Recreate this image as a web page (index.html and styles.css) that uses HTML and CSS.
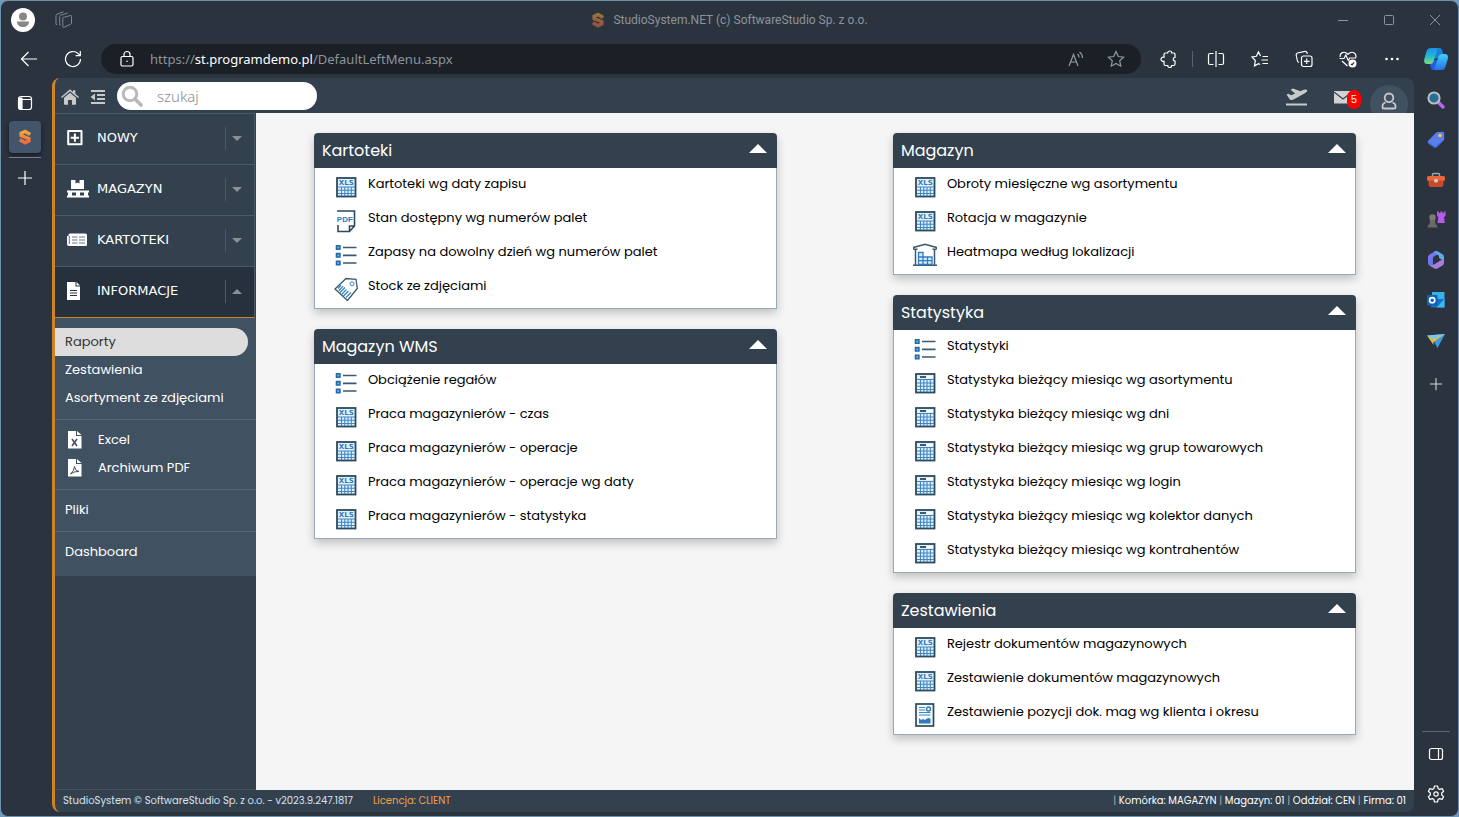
FILE: index.html
```html
<!DOCTYPE html>
<html lang="pl">
<head>
<meta charset="utf-8">
<title>StudioSystem.NET (c) SoftwareStudio Sp. z o.o.</title>
<link rel="stylesheet" href="styles.css">
</head>
<body>
<svg class="sprite" aria-hidden="true">
  <defs>
    <linearGradient id="g-s" x1="0" y1="0" x2="0" y2="1"><stop offset="0" stop-color="#f6a53a"/><stop offset="1" stop-color="#ee6a3c"/></linearGradient>
    <linearGradient id="g-cop1" x1="0" y1="0" x2="0" y2="1"><stop offset="0" stop-color="#1c8fe6"/><stop offset=".5" stop-color="#22b8d4"/><stop offset="1" stop-color="#7fdc7a"/></linearGradient>
    <linearGradient id="g-cop2" x1="0" y1="0" x2="0" y2="1"><stop offset="0" stop-color="#3fd2f5"/><stop offset="1" stop-color="#2a70e8"/></linearGradient>
    <linearGradient id="g-m1" x1="0" y1="0" x2="1" y2="1"><stop offset="0" stop-color="#8b7bf0"/><stop offset="1" stop-color="#3f6fe0"/></linearGradient>
  </defs>
  <symbol id="i-logo" viewBox="0 0 16 20">
    <path fill="none" stroke="url(#g-s)" stroke-width="4.400" d="M14.500 7L8 3 3.200 5.500v2.800l9.600 3.800v2.700L8 17.300 1.500 13.300"/>
  </symbol>
  <symbol id="i-table" viewBox="0 0 24 24">
    <rect x="3" y="3" width="18.500" height="18.500" fill="#e3f0fa" stroke="#2b4a5c" stroke-width="1.800"/>
    <path d="M4 8.500h17M4 12h17M4 15.300h17M4 18.500h17M7.500 8v13M10.800 8v13M14 8v13M17.300 8v13" stroke="#3f86c2" stroke-width="1.100"/>
    <path d="M7 6h6" stroke="#2b4a5c" stroke-width="1.800"/><path d="M14 6h6" stroke="#fff" stroke-width="1.800"/>
  </symbol>
  <symbol id="i-list" viewBox="0 0 24 24">
    <path d="M9 4.500h13.500M9 12.300h13.500M9 20h13.500" stroke="#3b5a6c" stroke-width="1.700"/>
    <path d="M2.500 2.800h3.400v3.400H2.500zM2.500 10.600h3.400V14H2.500zM2.500 18.300h3.400v3.400H2.500z" fill="#6fb0e2" stroke="#1e6bb0" stroke-width="1.600"/>
  </symbol>
  <symbol id="i-tag" viewBox="0 0 24 24">
    <path d="M1 12L12 1.500l10 .8 1.300 9.200L13.500 23.500z" fill="#fff" stroke="#3b5a6c" stroke-width="1.300"/>
    <circle cx="18" cy="6.800" r="2" fill="none" stroke="#3f86c2"/>
    <path d="M7 8l-3 3.500M9 9.200l-4.200 4.600M11 10.500l-5 5M12.500 12.500l-5 5M14.500 14l-5 5M17 15.500l-5 5" stroke="#3f86c2" stroke-width="1.300"/>
  </symbol>
  <symbol id="i-ware" viewBox="0 0 24 24">
    <path d="M2.500 6.500V22M21.500 6.500V22M0 22.300h24M.5 6.500V4.500L12 1.300l11.500 3.200v2M.5 6.300h4M19.500 6.300h4" fill="none" stroke="#3b5a6c" stroke-width="1.500"/>
    <path d="M5.500 9.500h4.500V21.500H5.500zM5.500 14h13.500v7.500H5.500M5.500 17.700h13.500M14.500 14v7.500" fill="#dcecf8" stroke="#2f7bbd" stroke-width="1.300"/>
  </symbol>
  <symbol id="i-report" viewBox="0 0 24 24">
    <rect x="3" y="1" width="17.500" height="22" fill="#f2f8fc" stroke="#2b4a5c" stroke-width="1.700"/>
    <path d="M6 4.500h6M6 7h6M6 9.500h11.500M6 12h11.500" stroke="#3f86c2" stroke-width="1.200"/>
    <circle cx="15.500" cy="6" r="2" fill="none" stroke="#2f7bbd" stroke-width="1.400"/>
    <path d="M6 20.500V15l2 2 2-1 2 1 2-1.500 2-.5 1.500 1v4.500z" fill="#2f7bbd"/>
  </symbol>
  <symbol id="i-plus" viewBox="0 0 16 16"><path d="M8 1v14M1 8h14" stroke="currentColor" stroke-width="1.200"/></symbol>
</svg>
<svg class="labelled-sprite" aria-hidden="true">
  <symbol id="i-xls" viewBox="0 0 24 24">
    <rect x="3" y="3" width="18.500" height="18.500" fill="#e3f0fa" stroke="#2b4a5c" stroke-width="1.800"/>
    <path d="M4 12h17M4 15.300h17M4 18.500h17M7.500 12v9M10.800 12v9M14 12v9M17.300 12v9" stroke="#3f86c2" stroke-width="1.100"/>
    <text class="xls-label" x="12.300" y="10.200" text-anchor="middle">XLS</text>
  </symbol>
  <symbol id="i-pdf" viewBox="0 0 24 24">
    <path d="M3 2h17.500v15l-5 5.500H4V16M15.500 22.500V17h5" fill="none" stroke="#2b4a5c" stroke-width="1.600"/>
    <text class="pdf-label" x="10.800" y="12.500" text-anchor="middle">PDF</text>
  </symbol>
</svg>

<div class="window">
  <header class="titlebar">
    <div class="title-left">
      <button class="avatar" aria-label="Profil">
        <svg viewBox="0 0 24 24"><circle cx="12" cy="8.500" r="4" fill="#8a8686"/><path d="M6 13.500h12c0 3.500-2.500 5.500-6 5.500s-6-2-6-5.500z" fill="#8a8686"/></svg>
      </button>
      <button class="spaces" aria-label="Obszary robocze">
        <svg viewBox="0 0 18 18" fill="none" stroke="#7e8892" stroke-linejoin="round"><path d="M8 6.500l7.500-2q1-.2 1 1V12q0 1-1 1.300l-6.500 3q-1.200.3-1.200-1V7.500z"/><path d="M5.500 14l-.8.100V5.500q0-1 1-1.300l7-2.200M2 13.500l-1 0V4.500q0-1 1-1.300l6.500-2.400"/></svg>
      </button>
    </div>
    <div class="title-text"><svg class="title-logo"><use href="#i-logo"/></svg><span>StudioSystem.NET (c) SoftwareStudio Sp. z o.o.</span></div>
    <div class="win-buttons">
      <button aria-label="Minimalizuj"><svg viewBox="0 0 12 12"><path d="M1 6.500h10"/></svg></button>
      <button aria-label="Maksymalizuj"><svg viewBox="0 0 12 12"><rect x="1.500" y="1.500" width="9" height="9" rx="1"/></svg></button>
      <button aria-label="Zamknij"><svg viewBox="0 0 12 12"><path d="M1 1l10 10M11 1L1 11"/></svg></button>
    </div>
  </header>

  <div class="toolbar">
    <button class="tool" aria-label="Wstecz"><svg viewBox="0 0 18 18"><path d="M17 9H1.500M8.500 2L1.500 9l7 7"/></svg></button>
    <button class="tool" aria-label="Odśwież"><svg viewBox="0 0 18 18"><path d="M16.500 9a7.500 7.500 0 1 1-2.300-5.400L16 5.500M16.300 1v4.700h-4.700"/></svg></button>
    <div class="address">
      <svg class="lock" viewBox="0 0 16 18"><rect x="2" y="6.500" width="12" height="9.500" rx="1.500"/><path d="M5 6.500V4.500a3 3 0 0 1 6 0v2"/><circle cx="8" cy="11.300" r=".8" fill="#fff" stroke="none"/></svg>
      <div class="url">https://<b>st.programdemo.pl</b>/DefaultLeftMenu.aspx</div>
      <button class="in-pill" aria-label="Czytaj na głos"><svg viewBox="0 0 18 18"><path d="M2 16L6.500 4.500 11 16M3.500 12h6M10.500 4q1.500 1 1.500 3.500M12.500 2q3 2 3 6"/></svg></button>
      <button class="in-pill" aria-label="Dodaj do ulubionych"><svg viewBox="0 0 18 18"><path d="M9 1.500l2.300 5 5.400.6-4 3.700 1.100 5.400L9 13.500l-4.800 2.700 1.100-5.400-4-3.700 5.400-.6z"/></svg></button>
    </div>
    <div class="tools">
      <button class="tool" aria-label="Rozszerzenia"><svg viewBox="0 0 18 18"><path d="M5.500 3h2.200a2 2 0 0 1 4 0h2q1.300 0 1.300 1.300V7.500a1.700 1.700 0 0 0 0 3.500v3q0 1.500-1.300 1.500h-2a2 2 0 0 1-4 0H5.500Q4 15.500 4 14v-2.700a2.200 2.200 0 1 1 0-4.100V4.500Q4 3 5.500 3z"/></svg></button>
      <span class="divider"></span>
      <button class="tool" aria-label="Podziel ekran"><svg viewBox="0 0 18 18"><path d="M9 1v16M6.500 3.500H3Q1.500 3.500 1.500 5v8Q1.500 14.500 3 14.500h3.500M11.500 3.500H15q1.500 0 1.500 1.500v8q0 1.500-1.500 1.500h-3.500"/></svg></button>
      <button class="tool" aria-label="Ulubione"><svg viewBox="0 0 18 18"><path d="M11.500 6.500H17M10.500 10H17M11.500 13.500H17M9.500 6L7.500 1.800 5.400 6.300 1 7l3.300 3.500-.8 5.300 4-2.200 1.700 1"/></svg></button>
      <button class="tool" aria-label="Kolekcje"><svg viewBox="0 0 18 18"><rect x="6.500" y="6" width="10.500" height="10.500" rx="2"/><path d="M11.700 8.500v5.500M9 11.300h5.500M4 12.500Q2.500 12 2.300 10.500L1.200 5Q1 3.500 2.500 3L10 1.300q1.500-.2 2 1.200l.3 1.500"/></svg></button>
      <button class="tool" aria-label="Podstawy przeglądarki"><svg viewBox="0 0 18 18"><path d="M1.200 7C.5 3 5 .3 9 4.200 13 .3 17.800 3 16.800 7.500M.5 8.500H5l1.800-3.500 2.500 5.500 1.500-2.500H17M3 11l5.500 5"/><circle cx="13.500" cy="13.500" r="4" fill="#fff" stroke="none"/><path d="M12 13.800l1 1 2-2.300" stroke="#2b333e"/></svg></button>
      <button class="tool" aria-label="Więcej"><svg viewBox="0 0 18 18"><g fill="#fff" stroke="none"><circle cx="3.500" cy="9" r="1.300"/><circle cx="9" cy="9" r="1.300"/><circle cx="14.500" cy="9" r="1.300"/></g></svg></button>
      <button class="tool copilot" aria-label="Copilot"><svg viewBox="0 0 24 24"><g stroke="none"><path fill="#1d5fe0" d="M10 13h5l-2.500 7.500Q11.500 23 9 23q-2 0-3-6z"/><path fill="#1b7fd8" d="M12 1h3.500q2.300 0 3 3l.8 3.500-4.800 4h-4.500z"/><path fill="url(#g-cop1)" d="M6.500 1H14l-4.500 13.500Q8.700 17 6 17H3.500Q-.8 17 .3 12L2.500 4.500Q3.500 1 6.500 1z"/><path fill="url(#g-cop2)" d="M17.500 23H10l4.500-13.500Q15.300 7 18 7h2.500q4.300 0 3.300 5l-2.300 7.500Q20.500 23 17.500 23z"/></g></svg></button>
    </div>
  </div>

  <div class="workspace">
    <nav class="tabs-rail" aria-label="Karty">
      <button class="rail-btn" aria-label="Menu kart"><svg viewBox="0 0 16 16" fill="none" stroke="#fff" stroke-width="1.200"><rect x="1.500" y="1.500" width="13" height="13" rx="2.500"/><path d="M2 4.500h12"/><path d="M2 3h3v11H3q-1 0-1-1z" fill="#fff"/></svg></button>
      <button class="tab-active" aria-label="StudioSystem.NET"><svg><use href="#i-logo"/></svg></button>
      <button class="rail-btn" aria-label="Nowa karta"><svg><use href="#i-plus"/></svg></button>
    </nav>

    <div class="app">
      <header class="app-bar">
        <button class="app-icon" aria-label="Start"><svg viewBox="0 0 18 16"><path fill="#c9c9c9" d="M9 3.800l6 5V15q0 .8-.8.8H11V11H7v4.800H3.800Q3 15.800 3 15V8.800zM0 8l9-7.700 3 2.600V1.200h2.300v3.600L18 8l-.9 1.100L9 2.200.9 9.100z"/></svg></button>
        <button class="app-icon" aria-label="Zwiń menu"><svg viewBox="0 0 18 16"><path fill="#c9c9c9" d="M2 1h14v2H2zM8 5h8v2H8zM8 9h8v2H8zM2 13h14v2H2zM6 4.500v7L1.500 8z"/></svg></button>
        <label class="search">
          <svg viewBox="0 0 22 22"><circle cx="9" cy="9" r="6.800" fill="none" stroke="#b9b9b9" stroke-width="3"/><path d="M14 14l6 6" stroke="#b9b9b9" stroke-width="3.600" stroke-linecap="round"/></svg>
          <input type="search" placeholder="szukaj" aria-label="szukaj">
        </label>
        <div class="app-right">
          <button class="plane" aria-label="Wydania"><svg viewBox="0 0 22 18"><path d="M0 15.500h21v2H0zM.5 6.500l2-.8 2.700 1.600 4-1.800L4.500 1.700 7 .5l7.500 2.700 3-1.400q3-1 3.800.4.300 1.500-2.500 3L8.500 11q-2 1.200-4.500.8z" fill="#c9c9c9"/></svg></button>
          <button class="mail" aria-label="Wiadomości: 5"><svg viewBox="0 0 18 13"><rect width="18" height="12.500" fill="#d2d2d2"/><path d="M0 1l9 7 9-7" fill="none" stroke="#33404e" stroke-width="1.200"/></svg><span class="badge">5</span></button>
          <button class="user" aria-label="Konto"><svg viewBox="0 0 16 18" fill="none" stroke="#c9c9c9" stroke-width="1.800"><circle cx="8" cy="5.800" r="4.300"/><path d="M4.500 10.500Q1.500 11.500 1.500 14v1.500q0 1 1 1h11q1 0 1-1V14q0-2.500-3-3.500"/></svg></button>
        </div>
      </header>

      <div class="app-body">
        <aside class="menu">
          <button class="menu-item"><svg viewBox="0 0 22 18"><path d="M1.200 2h13.300v13.300H1.200z" fill="none" stroke="#fff" stroke-width="2" stroke-linejoin="round"/><path d="M7.900 4.500v8.300M3.700 8.700H12" stroke="#fff" stroke-width="2"/></svg><span>NOWY</span><i class="caret"></i></button>
          <button class="menu-item"><svg viewBox="0 0 22 18"><path d="M4 0h4.500v3.500l2-1 2 1V0H17v9H4zM0 10.500h22v2H0zM0 15.500h22v2H0zM1 12h4v4H1zM9 12h4v4H9zM17 12h4v4h-4z" fill="#fff"/></svg><span>MAGAZYN</span><i class="caret"></i></button>
          <button class="menu-item"><svg viewBox="0 0 22 18"><path d="M3 2.500h15.500q1.500 0 1.500 1.500v9.500q0 1.500-1.500 1.500H2q-2 0-2-2V5h1.500V4q0-1.500 1.500-1.500z" fill="#fff"/><path d="M5 6h5.500M12 6h6M5 9h5.500M12 9h6M5 12h5.500M12 12h6M2.300 5v8" stroke="#667583" stroke-width="1"/></svg><span>KARTOTEKI</span><i class="caret"></i></button>
          <button class="menu-item open" aria-expanded="true"><svg viewBox="0 0 22 18"><path d="M0 0h8.500v4.500H13V18H0zM9.500 0L13 3.500H9.500z" fill="#fff"/><path d="M3 8.500h7M3 11h7M3 13.500h7" stroke="#27313d" stroke-width="1.200"/></svg><span>INFORMACJE</span><i class="caret"></i></button>
          <div class="submenu">
            <a class="sub current" href="#">Raporty</a>
            <a class="sub" href="#">Zestawienia</a>
            <a class="sub" href="#">Asortyment ze zdjęciami</a>
            <hr>
            <a class="sub" href="#"><svg viewBox="0 0 14 18"><path d="M0 0h8v5h5.500v12.500H0zM9 0l4.500 4H9z" fill="#fff"/><path d="M4 8l5 7M9 8l-5 7" stroke="#405161" stroke-width="1.600"/></svg>Excel</a>
            <a class="sub" href="#"><svg viewBox="0 0 14 18"><path d="M0 0h8v5h5.500v12.500H0zM9 0l4.500 4H9z" fill="#fff"/><path d="M2.500 15Q6 12.500 6.500 7.500 7 12 11 12.500 6.500 12 2.500 15z" fill="none" stroke="#405161"/></svg>Archiwum PDF</a>
            <hr>
            <a class="sub" href="#">Pliki</a>
            <hr>
            <a class="sub" href="#">Dashboard</a>
          </div>
        </aside>

        <main class="content">
          <div class="column">
            <section class="panel">
              <header><h2>Kartoteki</h2><button class="fold" aria-label="Zwiń Kartoteki"></button></header>
              <ul>
                <li><a href="#"><svg><use href="#i-xls"/></svg>Kartoteki wg daty zapisu</a></li>
                <li><a href="#"><svg><use href="#i-pdf"/></svg>Stan dostępny wg numerów palet</a></li>
                <li><a href="#"><svg><use href="#i-list"/></svg>Zapasy na dowolny dzień wg numerów palet</a></li>
                <li><a href="#"><svg><use href="#i-tag"/></svg>Stock ze zdjęciami</a></li>
              </ul>
            </section>
            <section class="panel">
              <header><h2>Magazyn WMS</h2><button class="fold" aria-label="Zwiń Magazyn WMS"></button></header>
              <ul>
                <li><a href="#"><svg><use href="#i-list"/></svg>Obciążenie regałów</a></li>
                <li><a href="#"><svg><use href="#i-xls"/></svg>Praca magazynierów - czas</a></li>
                <li><a href="#"><svg><use href="#i-xls"/></svg>Praca magazynierów - operacje</a></li>
                <li><a href="#"><svg><use href="#i-xls"/></svg>Praca magazynierów - operacje wg daty</a></li>
                <li><a href="#"><svg><use href="#i-xls"/></svg>Praca magazynierów - statystyka</a></li>
              </ul>
            </section>
          </div>
          <div class="column">
            <section class="panel">
              <header><h2>Magazyn</h2><button class="fold" aria-label="Zwiń Magazyn"></button></header>
              <ul>
                <li><a href="#"><svg><use href="#i-xls"/></svg>Obroty miesięczne wg asortymentu</a></li>
                <li><a href="#"><svg><use href="#i-xls"/></svg>Rotacja w magazynie</a></li>
                <li><a href="#"><svg><use href="#i-ware"/></svg>Heatmapa według lokalizacji</a></li>
              </ul>
            </section>
            <section class="panel">
              <header><h2>Statystyka</h2><button class="fold" aria-label="Zwiń Statystyka"></button></header>
              <ul>
                <li><a href="#"><svg><use href="#i-list"/></svg>Statystyki</a></li>
                <li><a href="#"><svg><use href="#i-table"/></svg>Statystyka bieżący miesiąc wg asortymentu</a></li>
                <li><a href="#"><svg><use href="#i-table"/></svg>Statystyka bieżący miesiąc wg dni</a></li>
                <li><a href="#"><svg><use href="#i-table"/></svg>Statystyka bieżący miesiąc wg grup towarowych</a></li>
                <li><a href="#"><svg><use href="#i-table"/></svg>Statystyka bieżący miesiąc wg login</a></li>
                <li><a href="#"><svg><use href="#i-table"/></svg>Statystyka bieżący miesiąc wg kolektor danych</a></li>
                <li><a href="#"><svg><use href="#i-table"/></svg>Statystyka bieżący miesiąc wg kontrahentów</a></li>
              </ul>
            </section>
            <section class="panel">
              <header><h2>Zestawienia</h2><button class="fold" aria-label="Zwiń Zestawienia"></button></header>
              <ul>
                <li><a href="#"><svg><use href="#i-xls"/></svg>Rejestr dokumentów magazynowych</a></li>
                <li><a href="#"><svg><use href="#i-xls"/></svg>Zestawienie dokumentów magazynowych</a></li>
                <li><a href="#"><svg><use href="#i-report"/></svg>Zestawienie pozycji dok. mag wg klienta i okresu</a></li>
              </ul>
            </section>
          </div>
        </main>
      </div>

      <footer class="status">
        <span>StudioSystem © SoftwareStudio Sp. z o.o. - v2023.9.247.1817</span>
        <span class="licence">Licencja: CLIENT</span>
        <span class="context"><i>|</i> Komórka: MAGAZYN <i>|</i> Magazyn: 01 <i>|</i> Oddział: CEN <i>|</i> Firma: 01</span>
      </footer>
    </div>

    <nav class="side-rail" aria-label="Pasek boczny">
      <button aria-label="Szukaj"><svg viewBox="0 0 20 20"><path d="M12.500 12.500l4.500 4.500" stroke="#c063ea" stroke-width="3.400" stroke-linecap="round"/><circle cx="8" cy="8" r="5.600" fill="#2a6d94" stroke="#b9c0c4" stroke-width="2"/></svg></button>
      <button aria-label="Zakupy"><svg viewBox="0 0 20 20"><path d="M2 11l8-8.300q.7-.7 1.700-.7l5-.2q1.500 0 1.500 1.500V9q0 1-.8 1.800L11 17q-1.500 1.300-3 .2l-5.500-3.500Q1 12.500 2 11z" fill="#5b7fea"/><path d="M2 12l6 4.500q1 .5 2 0l8-7-.8 1.500L11 17.200q-1.500 1.200-3 .2L2.500 13.800z" fill="#3458c8"/><circle cx="14" cy="5.500" r="1.800" fill="#f5c84c"/></svg></button>
      <button aria-label="Narzędzia"><svg viewBox="0 0 20 20"><path d="M6.500 7V4.500q0-1 1-1h5q1 0 1 1V7" fill="none" stroke="#9aa3aa" stroke-width="1.500"/><rect x="1" y="6" width="18" height="5" rx="1.500" fill="#e8673c"/><path d="M2.500 10.500h15V15q0 2-2 2h-11q-2 0-2-2z" fill="#c9472a"/><circle cx="10" cy="10.800" r="2" fill="#c9cdd0"/></svg></button>
      <button aria-label="Gry"><svg viewBox="0 0 20 20"><circle cx="6.500" cy="7.500" r="3.200" fill="#7b7b7b"/><path d="M4 10h5l.5 4q2 1 2 3.500h-10Q1.500 15 3.500 14z" fill="#696969"/><path d="M11 1.500h2v1.500h1.500V1.500h2v1.500H18V1.500h1.500V6l-1.500 1 .8 6H11.500l.8-6L11 6z" fill="#b55ce6"/></svg></button>
      <button aria-label="Microsoft 365"><svg viewBox="0 0 20 20"><path d="M10 1L3.500 4.500Q2 5.500 2 7v6q0 1.500 1.500 2.500L7 17.300V8.500q0-1.300 1-2l5.500-3z" fill="url(#g-m1)"/><path d="M7.500 1.800L10 1q1 0 2 .5l4.500 2.700Q18 5 18 7v4l-5-3V6.500q0-1-1-1.500z" fill="#62a8ee"/><path d="M18 10v3q0 1.500-1.500 2.500L12 18.300q-2 1-4 0L3.500 15.500 8 14.500l8-5z" fill="#a77bd8"/></svg></button>
      <button aria-label="Outlook"><svg viewBox="0 0 20 20"><rect x="6" y="2" width="12.500" height="9" fill="#35b1ec"/><path d="M5 9h13.500v8.500H5z" fill="#1573c8"/><path d="M18.500 9l-8 8.500h8z" fill="#40b9f1"/><rect x="1" y="5" width="10.500" height="10.500" rx="1" fill="#0f64b8"/><circle cx="6.200" cy="10.200" r="2.600" fill="none" stroke="#fff" stroke-width="1.600"/></svg></button>
      <button aria-label="Drop"><svg viewBox="0 0 20 20"><path d="M1 5.500l18-1.500-7.500 14-3-5.500z" fill="#3d9ae6"/><path d="M1 5.500L19 4 7 10.500z" fill="#7cc6ef"/><path d="M1 5.500l6 4L19 4 7.500 12v3z" fill="#e7bb3c"/></svg></button>
      <button class="side-plus" aria-label="Dostosuj"><svg><use href="#i-plus"/></svg></button>
      <span class="rail-line"></span>
      <button class="line-icon" aria-label="Ukryj pasek"><svg viewBox="0 0 16 16"><rect x="1.500" y="2.500" width="13" height="11" rx="2"/><path d="M10.500 2.500v11"/></svg></button>
      <button class="line-icon gear" aria-label="Ustawienia"><svg viewBox="0 0 18 18"><circle cx="9" cy="9" r="2.200"/><path d="M7.500 1h3l.6 2.500 1.500.9 2.500-.8 1.500 2.600-1.900 1.800v1.900l1.900 1.800-1.500 2.700-2.500-.8-1.500.9-.6 2.500h-3l-.6-2.500-1.500-.9-2.500.8-1.500-2.700 1.900-1.800V8L1.400 6.200l1.500-2.600 2.500.8 1.500-.9z" stroke-linejoin="round"/></svg></button>
    </nav>
  </div>
</div>
</body>
</html>
```

FILE: styles.css
```css
* { box-sizing: border-box; }

body {
  margin: 0;
  background: #6f9bc0;
  font-family: Poppins, Inter, "Open Sans", sans-serif;
  font-size: 13px;
  color: #000;
}

button {
  display: flex;
  align-items: center;
  justify-content: center;
  padding: 0;
  border: 0;
  background: none;
  color: inherit;
  font: inherit;
}

a { color: inherit; text-decoration: none; }
svg { display: block; flex: none; }
.sprite { position: absolute; width: 0; height: 0; }
.labelled-sprite { display: none; }

.window {
  display: flex;
  flex-direction: column;
  min-height: 100vh;
  border: 1px solid #6e93a8;
  border-radius: 8px;
  background: #2b333e;
  overflow: hidden;
}

/* Title bar */
.titlebar {
  display: grid;
  grid-template-columns: 1fr auto 1fr;
  align-items: center;
  height: 38px;
  font-family: Roboto, "Noto Sans", sans-serif;
  font-size: 12px;
  color: #8b949c;
}
.title-left { display: flex; align-items: center; gap: 20px; padding-left: 10px; }
.avatar { width: 24px; height: 24px; border-radius: 50%; background: #fff; }
.avatar svg { width: 24px; height: 24px; }
.spaces svg { width: 18px; height: 18px; }
.title-text { display: flex; align-items: center; gap: 8px; }
.title-logo { width: 14px; height: 16px; opacity: .55; }
.win-buttons { display: flex; justify-content: flex-end; }
.win-buttons button { width: 46px; height: 38px; }
.win-buttons svg { width: 12px; height: 12px; fill: none; stroke: #8b949c; }

/* Address row */
.toolbar { display: flex; align-items: center; height: 39px; padding-left: 6px; }
.tool { width: 44px; height: 38px; }
.tool svg, .in-pill svg { width: 18px; height: 18px; fill: none; stroke: #fff; stroke-width: 1.2; }
.copilot { width: 44px; }
.copilot svg { width: 24px; height: 24px; }
.address {
  display: flex;
  flex: 1;
  align-items: center;
  height: 30px;
  margin: 0 6px;
  padding: 0 5px 0 17px;
  border-radius: 15px;
  background: #1b2027;
}
.lock { width: 18px; height: 18px; margin-right: 14px; fill: none; stroke: #fff; stroke-width: 1.2; }
.url { flex: 1; font-family: "Noto Sans", "Open Sans", sans-serif; font-size: 13px; color: #8d9399; }
.url b { font-weight: 400; color: #fff; }
.in-pill { width: 40px; height: 30px; }
.in-pill svg { stroke: #9299a0; }
.tools { display: flex; align-items: center; }
.divider { width: 1px; height: 16px; margin: 0 1px; background: #59626c; }

.workspace { display: flex; flex: 1; }

/* Browser tabs on the left */
.tabs-rail { display: flex; flex-direction: column; align-items: flex-start; width: 51px; padding: 9px 0 0 8px; }
.rail-btn { width: 32px; height: 32px; color: #fff; }
.rail-btn svg { width: 16px; height: 16px; }
.tab-active {
  position: relative;
  width: 32px;
  height: 32px;
  margin: 2px 0 9px;
  border-radius: 4px;
  background: #43556a;
  box-shadow: 0 2px 4px rgba(0, 0, 0, .5);
}
.tab-active svg { width: 14px; height: 16px; }
.tab-active::after { content: ""; position: absolute; top: 36px; left: 0; width: 100%; height: 1px; background: #77808a; }

/* Application */
.app {
  display: flex;
  flex: 1;
  flex-direction: column;
  margin-bottom: 4px;
  border-left: 3px solid #cd8426;
  border-radius: 8px;
  background: #33414f;
  overflow: hidden;
}
.app-bar { display: flex; height: 35px; padding: 0 6px 0 1px; overflow: hidden; }
.app-icon { width: 28px; height: 37px; }
.app-icon svg { width: 18px; height: 16px; }
.search {
  display: flex;
  align-items: center;
  width: 200px;
  height: 28px;
  margin: 4px 0 0 5px;
  padding-left: 4px;
  border-radius: 14px;
  background: #fff;
}
.search svg { width: 22px; height: 22px; }
.search input {
  width: 150px;
  margin-left: 14px;
  padding: 0;
  border: 0;
  outline: 0;
  background: none;
  font-family: "Noto Sans", "Open Sans", sans-serif;
  font-size: 15px;
  font-weight: 300;
}
.search input::placeholder { color: #8c8c8c; }
.app-right { display: flex; margin-left: auto; }
.plane { width: 22px; height: 38px; margin-right: 26px; }
.plane svg { width: 22px; height: 18px; }
.mail { position: relative; width: 18px; height: 38px; margin-right: 18px; }
.mail svg { width: 18px; height: 13px; }
.badge {
  position: absolute;
  top: 12px;
  left: 13px;
  width: 14px;
  border-radius: 7px;
  background: #f00;
  color: #fff;
  font-size: 10px;
  line-height: 19px;
  text-align: center;
}
.user { width: 38px; height: 38px; margin-top: 7px; border-radius: 50%; background: #405161; }
.user svg { width: 16px; height: 18px; margin-bottom: 7px; }

.app-body { display: flex; flex: 1; }

/* Left menu */
.menu { width: 201px; flex: none; border-bottom: 1px solid #44535f; }
.menu-item {
  justify-content: flex-start;
  width: 200px;
  height: 51px;
  padding: 0 8px 3px 12px;
  border-top: 1px solid #4a5a66;
  border-right: 1px solid #4a5a66;
  color: #fff;
  font-family: "DejaVu Sans", sans-serif;
}
.menu-item svg { width: 22px; height: 18px; margin-right: 8px; }
.menu-item span { flex: 1; text-align: left; }
.caret { display: flex; align-items: center; justify-content: flex-end; width: 21px; height: 23px; margin-top: 1px; border-left: 1px solid #4a5965; }
.caret::after { content: ""; margin-right: 4px; border: 5px solid transparent; border-top-color: #8a8f93; border-bottom: 0; }
.menu-item.open { height: 52px; border-bottom: 1px solid #cd8426; background: #27313d; }
.open .caret::after { border-top: 0; border-bottom: 5px solid #8a8f93; }
.submenu { padding: 10px 0; background: #405161; color: #fff; }
.submenu hr { height: 1px; margin: 7px 0 6px; border: 0; background: #536474; }
.sub { display: flex; align-items: center; height: 28px; padding-left: 10px; line-height: 28px; }
.sub svg { width: 14px; height: 18px; margin: 0 16px 0 3px; }
.current { margin-right: 8px; border-radius: 0 14px 14px 0; background: #ddd; color: #333; }

/* Report panels */
.content { display: flex; flex: 1; background: #f5f5f5; }
.column { display: flex; flex: 1; flex-direction: column; gap: 20px; padding: 20px 5%; }
.panel { border-radius: 4px 4px 0 0; background: #fff; box-shadow: 0 4px 10px rgba(0, 0, 0, .22); }
.panel header {
  display: flex;
  align-items: center;
  justify-content: space-between;
  height: 35px;
  padding: 0 10px 0 8px;
  border-radius: 4px 4px 0 0;
  background: #33414f;
  color: #fff;
}
.panel h2 { margin: 0; font-size: 16px; font-weight: 400; }
.fold { width: 18px; height: 12px; margin-bottom: 5px; }
.fold::after { content: ""; border: 9px solid transparent; border-top: 0; border-bottom-color: #fff; }
.panel ul { margin: 0; padding: 0 0 4px; border: 1px solid #9aa9b8; border-top: 0; list-style: none; }
.panel li a { display: flex; height: 34px; padding-left: 19px; line-height: 32px; white-space: nowrap; }
.panel li svg { width: 24px; height: 24px; margin: 7px 10px 0 0; }
.xls-label { font: 700 7px "DejaVu Sans", sans-serif; fill: #2f7bbd; }
.pdf-label { font: 700 8px "Liberation Sans", sans-serif; fill: #2f7bbd; }

/* Status bar */
.status { display: flex; align-items: center; height: 22px; padding: 0 8px; color: #d8e2ee; font-size: 10px; }
.licence { margin-left: 20px; color: #f0a04b; }
.context { margin-left: auto; color: #fff; }
.context i { font-style: normal; color: #a5adb5; }

/* Browser side bar */
.side-rail { display: flex; flex-direction: column; align-items: center; width: 44px; padding: 2px 0 2px; color: #d5d9dd; }
.side-rail button { width: 40px; height: 40px; }
.side-rail svg { width: 20px; height: 20px; }
.side-rail .side-plus { margin-top: 4px; }
.side-rail .side-plus svg { width: 14px; height: 14px; }
.rail-line { width: 28px; height: 1px; margin: auto 0 2px; background: #59626c; }
.side-rail .line-icon svg { width: 16px; height: 16px; fill: none; stroke: #fff; stroke-width: 1.2; }
.side-rail .gear svg { width: 18px; height: 18px; }
```
